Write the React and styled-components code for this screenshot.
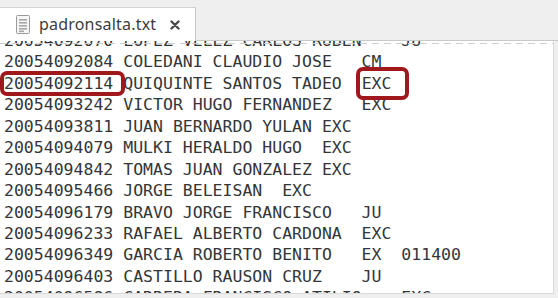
import styled, { createGlobalStyle } from 'styled-components';

const GlobalStyle = createGlobalStyle`
    html, body {
        margin: 0;
        padding: 0;
        background: #efefef;
        overflow: hidden;
    }
`;

const Window = styled.div`
    width: 558px;
    height: 298px;
    display: flex;
    flex-direction: column;
    background: #efefef;
`;

const TabBar = styled.div`
    height: 41px;
    display: flex;
    align-items: flex-end;
    flex-shrink: 0;
`;

const Tab = styled.div`
    width: 196px;
    height: 34px;
    box-sizing: border-box;
    background: #ffffff;
    border-top: 1px solid #d4d4d4;
    border-right: 1px solid #c4c4c4;
    display: flex;
    align-items: center;
    padding-left: 16px;
    gap: 9px;
    font-family: 'Noto Sans', 'Open Sans', sans-serif;
    font-size: 16px;
    color: #3c3c3c;
`;

const TabTitle = styled.span`
    margin-top: -1px;
    letter-spacing: 0.2px;
`;

const CloseBtn = styled.span`
    display: flex;
    margin-left: 5px;
    margin-top: 1px;
`;

const TabFill = styled.div`
    flex: 1;
    height: 100%;
    border-bottom: 1px solid #c9c9c9;
    box-sizing: border-box;
`;

const Body = styled.div`
    flex: 1;
    display: flex;
`;

const Editor = styled.div`
    width: 554px;
    height: 253px;
    box-sizing: border-box;
    background: #ffffff;
    border-right: 1px solid #dadada;
    border-bottom: 1px solid #dadada;
    overflow: hidden;
    position: relative;
`;

const DashRule = styled.div`
    position: absolute;
    left: 0;
    right: 0;
    top: 2px;
    height: 1px;
    background: repeating-linear-gradient(90deg, #cfcfcf 0 7px, transparent 7px 12px);
    z-index: 2;
`;

const Lines = styled.div`
    margin-top: -11px;
    padding-left: 4px;
    font-family: 'DejaVu Sans Mono', 'Liberation Mono', monospace;
    font-size: 16.5px;
    line-height: 21.44px;
    color: #333638;
`;

const Line = styled.div`
    white-space: pre;
    height: 21.44px;
`;

const Mark = styled.span`
    position: relative;
    &::after {
        content: '';
        position: absolute;
        left: ${(p) => p.$l}px;
        right: ${(p) => p.$r}px;
        top: ${(p) => p.$t}px;
        bottom: ${(p) => p.$b}px;
        border: 4px solid #a0181c;
        border-radius: 7px;
    }
`;

const rows = [
    '20054092070 LOPEZ VELEZ CARLOS RUBEN    JU',
    '20054092084 COLEDANI CLAUDIO JOSE   CM',
    null,
    '20054093242 VICTOR HUGO FERNANDEZ   EXC',
    '20054093811 JUAN BERNARDO YULAN EXC',
    '20054094079 MULKI HERALDO HUGO  EXC',
    '20054094842 TOMAS JUAN GONZALEZ EXC',
    '20054095466 JORGE BELEISAN  EXC',
    '20054096179 BRAVO JORGE FRANCISCO   JU',
    '20054096233 RAFAEL ALBERTO CARDONA  EXC',
    '20054096349 GARCIA ROBERTO BENITO   EX  011400',
    '20054096403 CASTILLO RAUSON CRUZ    JU',
    '20054096586 CARRERA FRANCISCO ATILIO    EXC',
];

function FileIcon() {
    return (
        <svg width="14" height="19" viewBox="0 0 14 19">
            <rect x="0.5" y="0.5" width="13" height="18" rx="1" fill="#f6f6f6" stroke="#9a9a9a" />
            {[4, 7, 10, 13].map((y) => (
                <rect key={y} x="3" y={y} width="8" height="1.6" fill="#a8a8a8" />
            ))}
            <rect x="3" y="15.5" width="5" height="1.6" fill="#a8a8a8" />
        </svg>
    );
}

function CloseIcon() {
    return (
        <svg width="10" height="10" viewBox="0 0 10 10">
            <path d="M1.5 1.5 L8.5 8.5 M8.5 1.5 L1.5 8.5" stroke="#4a4a4a" strokeWidth="2.4" strokeLinecap="round" />
        </svg>
    );
}

export default function App() {
    return (
        <>
            <GlobalStyle />
            <Window>
                <TabBar>
                    <Tab>
                        <FileIcon />
                        <TabTitle>padronsalta.txt</TabTitle>
                        <CloseBtn>
                            <CloseIcon />
                        </CloseBtn>
                    </Tab>
                    <TabFill />
                </TabBar>
                <Body>
                    <Editor>
                        <DashRule />
                        <Lines>
                            {rows.map((r, i) =>
                                r ? (
                                    <Line key={i}>{r}</Line>
                                ) : (
                                    <Line key={i}>
                                        <Mark $l={-4} $r={-2} $t={-3} $b={-3}>20054092114 </Mark>
                                        QUIQUINTE SANTOS TADEO{'  '}
                                        <Mark $l={-6} $r={-18} $t={-7} $b={-7}>EXC</Mark>
                                    </Line>
                                )
                            )}
                        </Lines>
                    </Editor>
                </Body>
            </Window>
        </>
    );
}
